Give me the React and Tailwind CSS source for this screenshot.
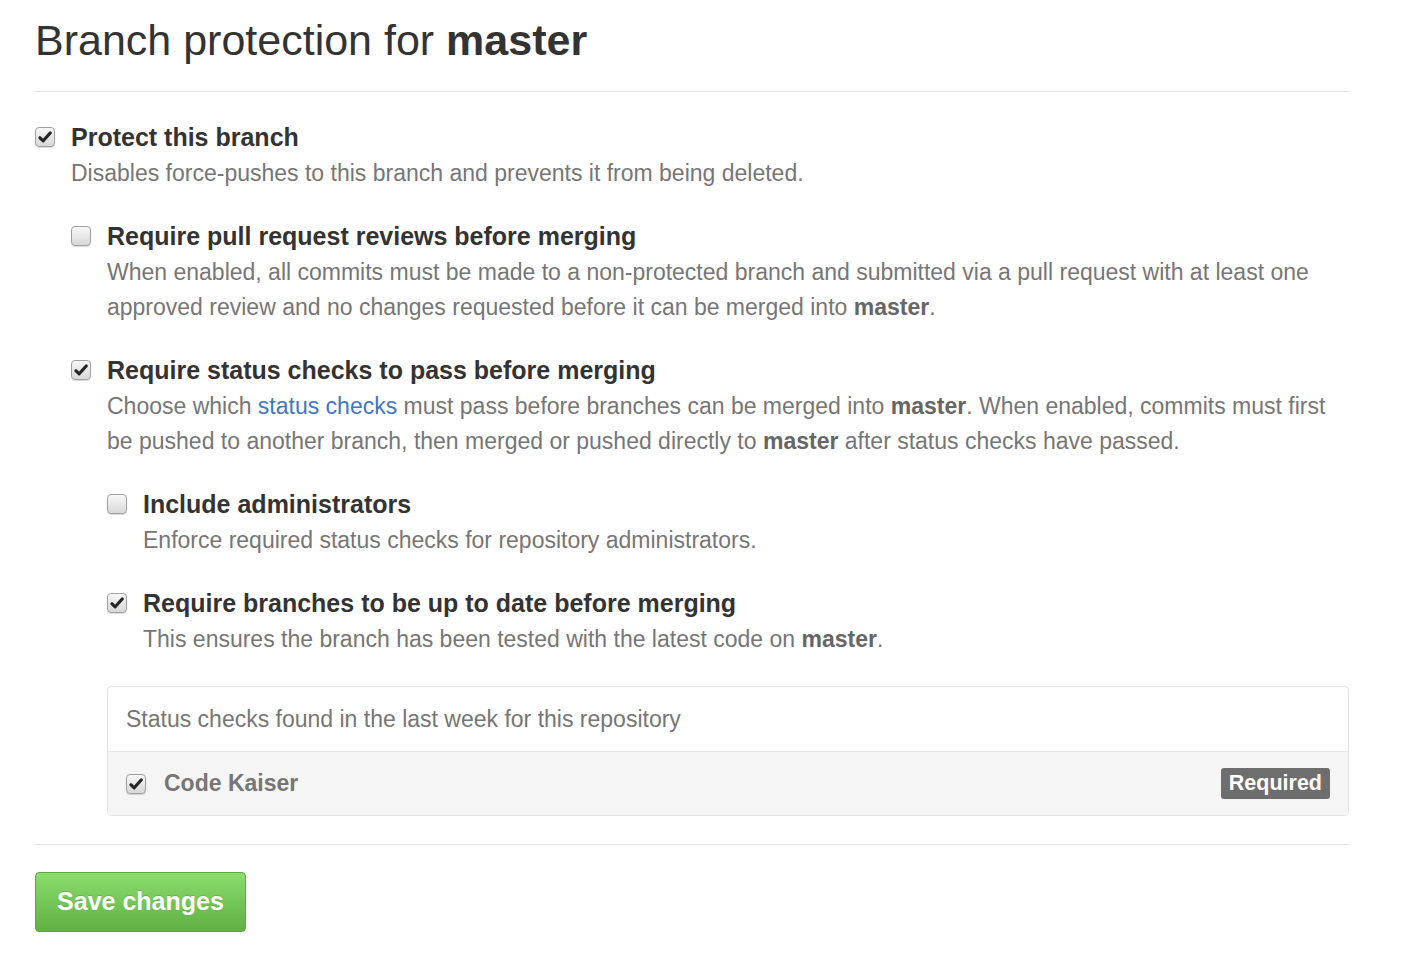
import React from 'react';

const Checkbox = ({ checked }) => (
  <span className="mt-[9px] flex h-[20px] w-[20px] shrink-0 items-center justify-center rounded-[4px] border border-[#a0a0a0] bg-gradient-to-b from-[#f8f8f8] to-[#d8d8d8] shadow-[0_1px_1px_rgba(0,0,0,0.15)]">
    {checked && (
      <svg width="14" height="12" viewBox="0 0 14 12">
        <path d="M2 6.8 L5.2 9.8 L12.2 2" fill="none" stroke="#262626" strokeWidth="3.2" strokeLinecap="round" strokeLinejoin="round" />
      </svg>
    )}
  </span>
);

const Option = ({ checked, title, children, className = '' }) => (
  <div className={`flex gap-[16px] ${className}`}>
    <Checkbox checked={checked} />
    <div className="min-w-0 flex-1">
      <div className="text-[25px] font-bold leading-[38px] text-[#333]">{title}</div>
      {children}
    </div>
  </div>
);

const Desc = ({ children }) => (
  <p className="text-[23px] leading-[35px] text-[#767676]">{children}</p>
);

const B = ({ children }) => <strong className="font-bold text-[#666]">{children}</strong>;

export default function App() {
  return (
    <div className="min-h-screen bg-white font-['Liberation_Sans',Arial,sans-serif]">
      <div className="ml-[35px] w-[1314px] pt-[14px]">
        <h2 className="border-b border-[#e5e5e5] pb-[25px] text-[43px] font-normal leading-[52px] text-[#333]">
          Branch protection for <strong className="font-bold">master</strong>
        </h2>

        <div className="pt-[26px]">
          <Option checked title="Protect this branch">
            <Desc>Disables force-pushes to this branch and prevents it from being deleted.</Desc>

            <Option className="mt-[26px]" title="Require pull request reviews before merging">
              <Desc>
                When enabled, all commits must be made to a non-protected branch and submitted via a pull request with at least one approved review and no changes requested before it can be merged into <B>master</B>.
              </Desc>
            </Option>

            <Option checked className="mt-[26px]" title="Require status checks to pass before merging">
              <Desc>
                Choose which <a href="#" className="text-[#4078c0]">status checks</a> must pass before branches can be merged into <B>master</B>. When enabled, commits must first be pushed to another branch, then merged or pushed directly to <B>master</B> after status checks have passed.
              </Desc>

              <Option className="mt-[26px]" title="Include administrators">
                <Desc>Enforce required status checks for repository administrators.</Desc>
              </Option>

              <Option checked className="mt-[26px]" title="Require branches to be up to date before merging">
                <Desc>This ensures the branch has been tested with the latest code on <B>master</B>.</Desc>
              </Option>
            </Option>
          </Option>

          <div className="ml-[72px] mt-[29px] rounded-[4px] border border-[#e5e5e5]">
            <div className="flex h-[64px] items-center px-[18px] text-[23px] text-[#767676]">
              Status checks found in the last week for this repository
            </div>
            <div className="flex h-[64px] items-center gap-[18px] rounded-b-[4px] border-t border-[#e5e5e5] bg-[#f5f5f5] px-[18px]">
              <span className="-mt-[9px]"><Checkbox checked /></span>
              <span className="flex-1 text-[23px] font-bold text-[#767676]">Code Kaiser</span>
              <span className="rounded-[3px] bg-[#6e6e6e] px-[8px] py-[2px] text-[21.5px] font-bold leading-[27px] text-white">Required</span>
            </div>
          </div>
        </div>

        <div className="mt-[28px] border-t border-[#e5e5e5] pt-[27px]">
          <button className="h-[60px] w-[211px] rounded-[4px] border border-[#5ca941] bg-gradient-to-b from-[#8add6d] to-[#60b044] text-[25px] font-bold text-white [text-shadow:0_-1px_0_rgba(0,0,0,0.15)]">
            Save changes
          </button>
        </div>
      </div>
    </div>
  );
}
